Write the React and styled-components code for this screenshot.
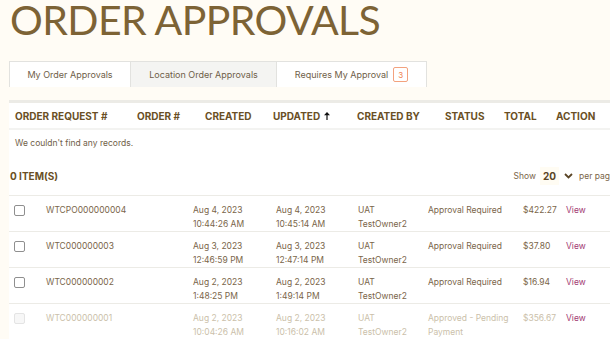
import React from "react";
import styled, { createGlobalStyle } from "styled-components";

const GlobalStyle = createGlobalStyle`
  body {
    margin: 0;
    background: #fffcf5;
    font-family: Inter, "Noto Sans", sans-serif;
    overflow: hidden;
  }
`;

const rows = [
  {
    id: "WTCPO000000004",
    created: ["Aug 4, 2023", "10:44:26 AM"],
    updated: ["Aug 4, 2023", "10:45:14 AM"],
    status: ["Approval Required"],
    total: "$422.27",
  },
  {
    id: "WTC000000003",
    created: ["Aug 3, 2023", "12:46:59 PM"],
    updated: ["Aug 3, 2023", "12:47:14 PM"],
    status: ["Approval Required"],
    total: "$37.80",
  },
  {
    id: "WTC000000002",
    created: ["Aug 2, 2023", "1:48:25 PM"],
    updated: ["Aug 2, 2023", "1:49:14 PM"],
    status: ["Approval Required"],
    total: "$16.94",
  },
  {
    id: "WTC000000001",
    created: ["Aug 2, 2023", "10:04:26 AM"],
    updated: ["Aug 2, 2023", "10:16:02 AM"],
    status: ["Approved - Pending", "Payment"],
    total: "$356.67",
    faded: true,
  },
];

function App() {
  return (
    <Page>
      <GlobalStyle />
      <Title>ORDER APPROVALS</Title>
      <Tabs>
        <Tab w={122}>My Order Approvals</Tab>
        <Tab w={145} grey>
          Location Order Approvals
        </Tab>
        <Tab w={151}>
          Requires My Approval <Badge>3</Badge>
        </Tab>
      </Tabs>
      <Panel>
        <HeadRow>
          <span>ORDER REQUEST #</span>
          <span>ORDER #</span>
          <span>CREATED</span>
          <span>
            UPDATED
            <svg width="6" height="8" viewBox="0 0 6 8" style={{ marginLeft: 4 }}>
              <path d="M3 0 L6 3.2 L3.6 3.2 L3.6 8 L2.4 8 L2.4 3.2 L0 3.2 Z" fill="#111" />
            </svg>
          </span>
          <span>CREATED BY</span>
          <span>STATUS</span>
          <span>TOTAL</span>
          <span>ACTION</span>
        </HeadRow>
        <EmptyRow>We couldn't find any records.</EmptyRow>
        <CountBar>
          <Count>0 ITEM(S)</Count>
          <PageSize>
            Show <SizeBox>20</SizeBox>
            <svg width="9" height="6" viewBox="0 0 9 6">
              <path d="M1 1 L4.5 4.5 L8 1" fill="none" stroke="#5a4526" strokeWidth="1.8" />
            </svg>
            <span style={{ marginLeft: 2 }}>per page</span>
          </PageSize>
        </CountBar>
        <Rows>
          {rows.map((r) => (
            <Row key={r.id} faded={r.faded}>
              <Check faded={r.faded} />
              <Cell>{r.id}</Cell>
              <Cell>
                {r.created[0]}
                <br />
                {r.created[1]}
              </Cell>
              <Cell>
                {r.updated[0]}
                <br />
                {r.updated[1]}
              </Cell>
              <Cell>
                UAT
                <br />
                TestOwner2
              </Cell>
              <Cell>
                {r.status.map((s, i) => (
                  <div key={i}>{s}</div>
                ))}
              </Cell>
              <Cell>{r.total}</Cell>
              <ViewLink href="#">View</ViewLink>
            </Row>
          ))}
        </Rows>
      </Panel>
    </Page>
  );
}

export default App;

const Page = styled.div`
  width: 640px;
  padding-left: 9px;
`;

const Title = styled.h1`
  margin: 0;
  padding: 1px 0 0 1px;
  height: 60px;
  font-family: Lato, sans-serif;
  font-weight: 400;
  font-size: 41px;
  line-height: 38px;
  letter-spacing: -0.6px;
  color: #7d6335;
`;

const Tabs = styled.div`
  display: flex;
  height: 26px;
`;

const Tab = styled.div`
  display: flex;
  align-items: center;
  justify-content: center;
  gap: 5px;
  box-sizing: border-box;
  width: ${(p) => p.w}px;
  background: ${(p) => (p.grey ? "#f4f4f2" : "#ffffff")};
  border: 1px solid #e2e2df;
  border-bottom: none;
  border-left: ${(p) => (p.grey ? "none" : "1px solid #e2e2df")};
  border-right: ${(p) => (p.grey ? "none" : "1px solid #e2e2df")};
  font-size: 9px;
  color: #6f5e48;
  white-space: nowrap;
`;

const Badge = styled.span`
  display: inline-flex;
  align-items: center;
  justify-content: center;
  width: 13px;
  height: 13px;
  border: 1px solid #f3a27e;
  border-radius: 2px;
  color: #f07f4e;
  font-size: 8px;
`;

const Panel = styled.div`
  margin-top: 13px;
  background: #ffffff;
  border-top: 3px solid #ecebe6;
`;

const HeadRow = styled.div`
  display: grid;
  grid-template-columns: 122px 68px 68px 84px 88px 59px 52px 1fr;
  align-items: center;
  height: 25px;
  padding-left: 6px;
  border-bottom: 2px solid #f3f3f1;
  font-size: 10px;
  font-weight: 700;
  color: #6a4f25;
  span {
    display: flex;
    align-items: center;
    white-space: nowrap;
  }
`;

const EmptyRow = styled.div`
  height: 25px;
  display: flex;
  align-items: center;
  padding-left: 6px;
  font-size: 8.5px;
  color: #6f5e48;
`;

const CountBar = styled.div`
  display: flex;
  justify-content: space-between;
  align-items: center;
  height: 38px;
  margin-top: 2px;
  padding-left: 1px;
`;

const Count = styled.span`
  font-size: 10px;
  font-weight: 700;
  color: #6a4f25;
`;

const PageSize = styled.div`
  display: flex;
  align-items: center;
  gap: 4px;
  margin-right: 34px;
  font-size: 8.5px;
  color: #7a6549;
`;

const SizeBox = styled.span`
  display: inline-flex;
  align-items: center;
  height: 18px;
  padding: 0 3px;
  margin-right: 1px;
  background: #fffcf3;
  font-size: 10px;
  font-weight: 700;
  color: #5a4526;
`;

const Rows = styled.div`
  border-top: 1px solid #ecebe6;
`;

const Row = styled.div`
  display: grid;
  grid-template-columns: 32px 147px 83px 82px 70px 95px 43px 1fr;
  height: 36px;
  padding: 7px 0 0 5px;
  box-sizing: border-box;
  border-bottom: 1px solid #ecebe6;
  font-size: 8.5px;
  line-height: 14px;
  color: ${(p) => (p.faded ? "#cbbfaa" : "#7a6549")};
`;

const Cell = styled.div`
  white-space: nowrap;
`;

const Check = styled.div`
  width: 9px;
  height: 9px;
  margin-top: 2px;
  border: 1px solid ${(p) => (p.faded ? "#e4e4e4" : "#8f8f8f")};
  border-radius: 2px;
  background: ${(p) => (p.faded ? "#f7f7f7" : "#fff")};
`;

const ViewLink = styled.a`
  color: #a23a72;
  text-decoration: none;
`;
